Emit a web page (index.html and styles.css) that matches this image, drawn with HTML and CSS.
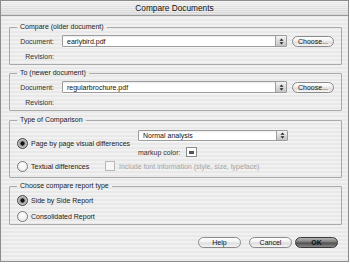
FILE: index.html
```html
<!DOCTYPE html>
<html>
<head>
<meta charset="utf-8">
<link rel="stylesheet" href="styles.css">
</head>
<body>
<div class="window">
  <div class="titlebar">Compare Documents</div>
  <div class="content">
    <fieldset class="group g1">
      <legend>Compare (older document)</legend>
      <div class="inner doc">
        <div class="row">
          <span class="lbl">Document:</span>
          <div class="select wide"><span class="val">earlybird.pdf</span><span class="stepper"><svg width="5" height="7" viewBox="0 0 5 7"><path d="M2.5 0.5 L4.5 2.8 L0.5 2.8 Z M2.5 6.5 L4.5 4.2 L0.5 4.2 Z" fill="#222"/></svg></span></div>
          <button class="btn choose">Choose...</button>
        </div>
        <div class="row rev"><span class="lbl">Revision:</span></div>
      </div>
    </fieldset>
    <fieldset class="group g2">
      <legend>To (newer document)</legend>
      <div class="inner doc">
        <div class="row">
          <span class="lbl">Document:</span>
          <div class="select wide"><span class="val">regularbrochure.pdf</span><span class="stepper"><svg width="5" height="7" viewBox="0 0 5 7"><path d="M2.5 0.5 L4.5 2.8 L0.5 2.8 Z M2.5 6.5 L4.5 4.2 L0.5 4.2 Z" fill="#222"/></svg></span></div>
          <button class="btn choose">Choose...</button>
        </div>
        <div class="row rev"><span class="lbl">Revision:</span></div>
      </div>
    </fieldset>
    <fieldset class="group g3">
      <legend>Type of Comparison</legend>
      <div class="inner cmp">
        <div class="cmp-top">
          <label class="radio on wide-radio"><span class="dot"></span>Page by page visual differences</label>
          <div class="cmp-right">
            <div class="select analysis"><span class="val">Normal analysis</span><span class="stepper"><svg width="5" height="7" viewBox="0 0 5 7"><path d="M2.5 0.5 L4.5 2.8 L0.5 2.8 Z M2.5 6.5 L4.5 4.2 L0.5 4.2 Z" fill="#222"/></svg></span></div>
            <div class="markup">markup color: <span class="swatch"><span class="swatch-fill"></span></span></div>
          </div>
        </div>
        <div class="cmp-bottom">
          <label class="radio text-radio"><span class="dot"></span>Textual differences</label>
          <label class="check disabled"><span class="box"></span>Include font information (style, size, typeface)</label>
        </div>
      </div>
    </fieldset>
    <fieldset class="group g4">
      <legend>Choose compare report type</legend>
      <div class="inner report">
        <label class="radio on"><span class="dot"></span>Side by Side Report</label>
        <label class="radio"><span class="dot"></span>Consolidated Report</label>
      </div>
    </fieldset>
    <div class="footer">
      <button class="btn help">Help</button>
      <button class="btn cancel">Cancel</button>
      <button class="btn ok">OK</button>
    </div>
  </div>
</div>
</body>
</html>
```
FILE: styles.css
```css
html, body {
  margin: 0;
  padding: 0;
  background: #ffffff;
}
body {
  font-family: "Liberation Sans", Arial, sans-serif;
  font-size: 7px;
  color: #222;
  width: 350px;
  height: 264px;
  overflow: hidden;
}
.window {
  width: 349px;
  height: 262px;
  box-sizing: border-box;
  border: 1px solid #8c8c8c;
  background: repeating-linear-gradient(180deg, #f1f1f1 0 2px, #e8e8e8 2px 4px);
  display: flex;
  flex-direction: column;
}
.titlebar {
  height: 14px;
  line-height: 14px;
  border-bottom: 1px solid #9a9a9a;
  text-align: center;
  font-size: 8.3px;
  color: #111;
  background:
    repeating-linear-gradient(180deg, rgba(255,255,255,0.35) 0 1px, rgba(0,0,0,0.03) 1px 2px),
    linear-gradient(#f2f2f2, #dadada);
}
.content {
  padding: 6px 6px 0 8px;
  display: flex;
  flex-direction: column;
}
.group {
  margin: 0;
  padding: 0;
  min-width: 0;
  border: 1px solid #a9a9a9;
  border-radius: 1px;
}
.group legend {
  font-size: 7px;
  line-height: 10px;
  padding: 0 3px;
  margin-left: 7px;
  color: #222;
}
.g2 { margin-top: 3px; }
.g3 { margin-top: 4px; }
.g4 { margin-top: 3px; }

.inner.doc {
  padding: 3px 0 3px 0;
}
.row {
  display: flex;
  align-items: center;
  height: 12px;
}
.row.rev {
  margin-top: 4px;
  height: 10px;
}
.lbl {
  width: 44px;
  text-align: right;
  margin-right: 8px;
  color: #333;
}
.select {
  box-sizing: border-box;
  height: 12px;
  border: 1px solid #9c9c9c;
  border-radius: 1px;
  background: linear-gradient(#eaeaea, #ffffff 2px, #ffffff);
  display: flex;
  align-items: center;
  justify-content: space-between;
  box-shadow: 0 1px 0 rgba(255,255,255,0.6);
}
.select .val {
  padding-left: 4px;
  color: #111;
  white-space: nowrap;
}
.select .stepper {
  width: 10px;
  height: 100%;
  border-left: 1px solid #a0a0a0;
  background: linear-gradient(#f4f4f4, #c4c4c4);
  display: flex;
  align-items: center;
  justify-content: center;
}
.select.wide { width: 225px; }
.btn {
  font-family: "Liberation Sans", Arial, sans-serif;
  font-size: 7px;
  color: #111;
  box-sizing: border-box;
  height: 11px;
  padding: 0;
  border: 1px solid #8a8a8a;
  border-radius: 6px;
  background: linear-gradient(#ffffff, #f0f0f0 45%, #dcdcdc 55%, #f6f6f6);
  line-height: 9px;
  text-align: center;
}
.choose {
  width: 42px;
  margin-left: 5px;
}

.inner.cmp {
  padding: 5px 0 6px 7px;
}
.cmp-top {
  display: flex;
  align-items: center;
}
.radio {
  display: flex;
  align-items: center;
  height: 11px;
  color: #222;
}
.radio .dot {
  width: 9px;
  height: 9px;
  border-radius: 50%;
  border: 1px solid #7a7a7a;
  background: radial-gradient(circle at 50% 35%, #ffffff, #e6e6e6);
  margin-right: 3px;
  flex: none;
  box-sizing: content-box;
}
.radio.on .dot {
  border-color: #444;
  background: radial-gradient(circle, #111 0 1.8px, #8e8e8e 2.3px, #c8c8c8 4px, #a8a8a8 5px);
}
.wide-radio { width: 121px; }
.text-radio { width: 88px; }
.cmp-right {
  display: flex;
  flex-direction: column;
}
.select.analysis {
  width: 150px;
  height: 11px;
}
.markup {
  margin-top: 6px;
  height: 10px;
  display: flex;
  align-items: center;
  color: #333;
}
.swatch {
  margin-left: 6px;
  width: 11px;
  height: 10px;
  box-sizing: border-box;
  border: 1px solid #8a8a8a;
  background: #fdfdfd;
  display: flex;
  align-items: center;
  justify-content: center;
}
.swatch-fill {
  width: 5px;
  height: 3px;
  background: #555;
}
.cmp-bottom {
  margin-top: 4px;
  height: 10px;
  display: flex;
  align-items: center;
}
.check {
  display: flex;
  align-items: center;
}
.check .box {
  width: 8px;
  height: 8px;
  border: 1px solid #b8b8b8;
  background: #f6f6f6;
  margin-right: 4px;
}
.check.disabled { color: #a4a4a4; }

.inner.report {
  padding: 4px 0 2px 7px;
  display: flex;
  flex-direction: column;
  gap: 5px;
}

.footer {
  margin-top: 12px;
  padding-right: 4px;
  display: flex;
  justify-content: flex-end;
}
.help { width: 43px; }
.cancel { width: 43px; margin-left: 8px; }
.ok {
  width: 43px;
  margin-left: 3px;
  border-color: #3a3a3a;
  font-weight: bold;
  color: #111;
  background: linear-gradient(#b4b4b4, #7a7a7a 45%, #4e4e4e 55%, #8a8a8a);
}
```
